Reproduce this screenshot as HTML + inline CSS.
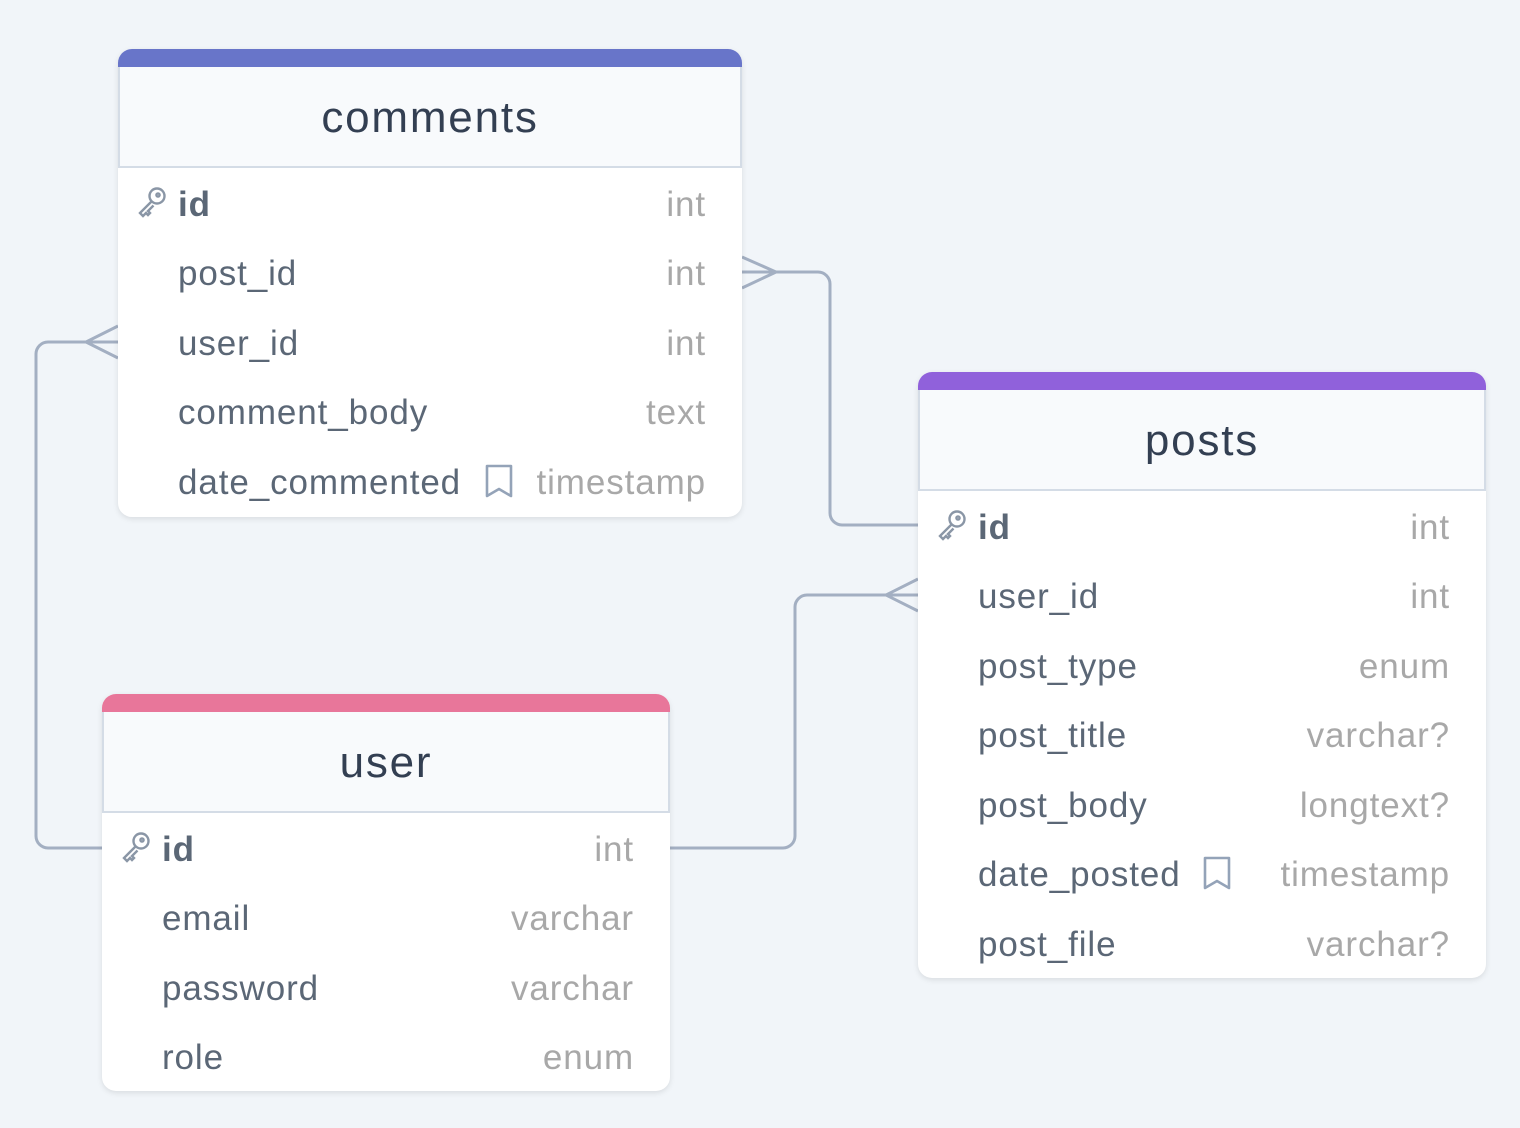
<!DOCTYPE html>
<html><head><meta charset="utf-8"><style>
body{margin:0;width:1520px;height:1128px;background:#f1f5f9;position:relative;overflow:hidden;font-family:"Liberation Sans",sans-serif}
.t{position:absolute;background:#fff;border-radius:14px;box-shadow:0 2px 6px rgba(0,0,0,.10);overflow:hidden}
.bar{height:18px}
.hd{background:#f8fafc;border:2px solid #d4dce6;border-top:none;display:flex;align-items:center;justify-content:center;font-size:44px;letter-spacing:1.8px;color:#333f52;box-sizing:border-box;height:101px;padding-top:2px}
.r{position:relative;height:69.5px;font-size:35px;letter-spacing:0.9px;color:#5b6776}
.r .n{position:absolute;left:60px;top:calc(50% + 2px);transform:translateY(-50%)}
.r .n.b{font-weight:bold}
.r .ty{position:absolute;right:36px;top:calc(50% + 2px);transform:translateY(-50%);color:#a8a8a8}
.r svg.k{position:absolute;left:18px;top:50%;transform:translateY(-50%)}
.r svg.bm{position:absolute;top:50%;transform:translateY(-50%)}
</style></head><body>
<svg width="1520" height="1128" style="position:absolute;left:0;top:0" fill="none" stroke="#a3afc2" stroke-width="3">
<path d="M742 272 H818 a12 12 0 0 1 12 12 V513 a12 12 0 0 0 12 12 H918"/>
<path d="M742 257 L776 272 L742 288"/>
<path d="M670 848 H783 a12 12 0 0 0 12 -12 V607 a12 12 0 0 1 12 -12 H918"/>
<path d="M918 579 L886 595 L918 611"/>
<path d="M102 848 H48 a12 12 0 0 1 -12 -12 V354 a12 12 0 0 1 12 -12 H118"/>
<path d="M118 326 L86 342 L118 358"/>
</svg>

<svg width="0" height="0" style="position:absolute"><defs>
<g id="key"><circle cx="21" cy="10" r="7.5"/><circle cx="22" cy="9" r="1.6"/><path d="M15.5 15.5 L4 27 L7 30 L10 27 L12 29 L14 27 L12 25 L17.5 19.5"/></g>
<g id="bk"><path d="M3 3 H27 V33 L15 26 L3 33 Z" stroke-linejoin="round"/></g>
</defs></svg>

<div class="t" style="left:118px;top:49px;width:624px;height:468px">
<div class="bar" style="background:#6875c9"></div>
<div class="hd">comments</div>
<div class="r"><svg class="k" width="32" height="34" fill="none" stroke="#8a96a6" stroke-width="2.4"><use href="#key"/></svg><span class="n b">id</span><span class="ty">int</span></div>
<div class="r"><span class="n">post_id</span><span class="ty">int</span></div>
<div class="r"><span class="n">user_id</span><span class="ty">int</span></div>
<div class="r"><span class="n">comment_body</span><span class="ty">text</span></div>
<div class="r"><span class="n">date_commented</span><svg class="bm" style="left:366px" width="30" height="36" fill="none" stroke="#94a3b8" stroke-width="2.6"><use href="#bk"/></svg><span class="ty">timestamp</span></div>
</div>

<div class="t" style="left:918px;top:372px;width:568px;height:606px">
<div class="bar" style="background:#9061db"></div>
<div class="hd">posts</div>
<div class="r"><svg class="k" width="32" height="34" fill="none" stroke="#8a96a6" stroke-width="2.4"><use href="#key"/></svg><span class="n b">id</span><span class="ty">int</span></div>
<div class="r"><span class="n">user_id</span><span class="ty">int</span></div>
<div class="r"><span class="n">post_type</span><span class="ty">enum</span></div>
<div class="r"><span class="n">post_title</span><span class="ty">varchar?</span></div>
<div class="r"><span class="n">post_body</span><span class="ty">longtext?</span></div>
<div class="r"><span class="n">date_posted</span><svg class="bm" style="left:284px" width="30" height="36" fill="none" stroke="#94a3b8" stroke-width="2.6"><use href="#bk"/></svg><span class="ty">timestamp</span></div>
<div class="r"><span class="n">post_file</span><span class="ty">varchar?</span></div>
</div>

<div class="t" style="left:102px;top:694px;width:568px;height:397px">
<div class="bar" style="background:#e8769a"></div>
<div class="hd">user</div>
<div class="r"><svg class="k" width="32" height="34" fill="none" stroke="#8a96a6" stroke-width="2.4"><use href="#key"/></svg><span class="n b">id</span><span class="ty">int</span></div>
<div class="r"><span class="n">email</span><span class="ty">varchar</span></div>
<div class="r"><span class="n">password</span><span class="ty">varchar</span></div>
<div class="r"><span class="n">role</span><span class="ty">enum</span></div>
</div>
</body></html>
